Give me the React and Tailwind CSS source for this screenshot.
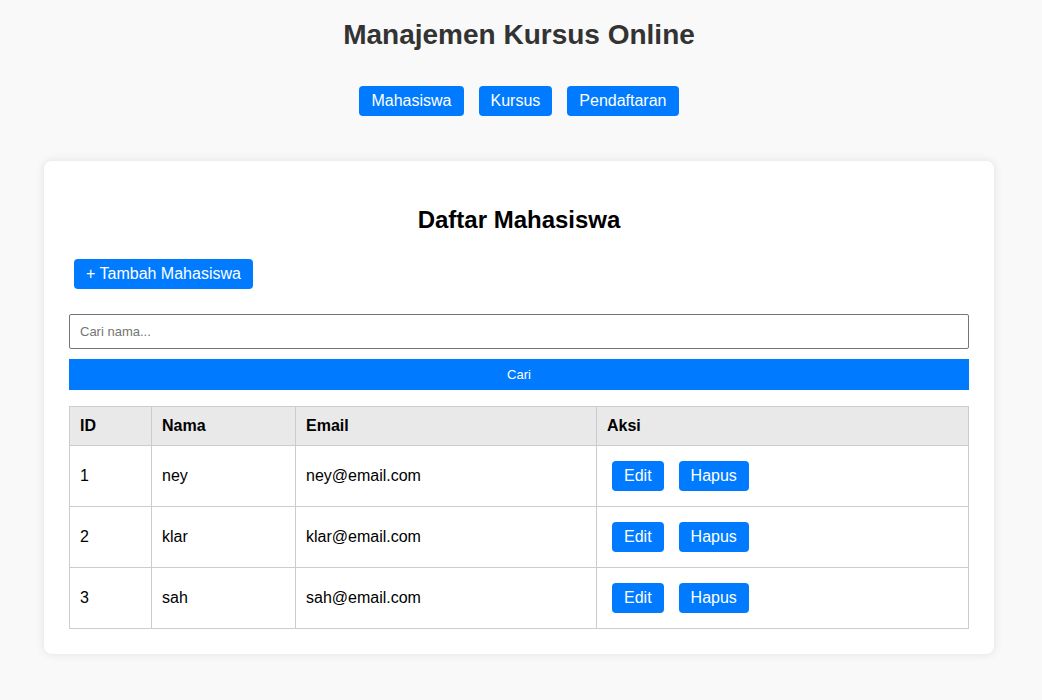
export default function App() {
  const rows = [
    { id: 1, nama: "ney", email: "ney@email.com" },
    { id: 2, nama: "klar", email: "klar@email.com" },
    { id: 3, nama: "sah", email: "sah@email.com" },
  ];
  return (
    <div className="min-h-[700px] bg-[#f9f9f9] font-['Liberation_Sans',Arial,sans-serif]">
      <div className="w-[1038px] pt-[19px]">
        <h1 className="text-center text-[28px] leading-[32px] font-bold text-[#333]">Manajemen Kursus Online</h1>
        <div className="mt-[35px] flex justify-center gap-[15px]">
          {["Mahasiswa", "Kursus", "Pendaftaran"].map((t) => (
            <button key={t} className="bg-[#007bff] text-white text-[16px] leading-[18px] py-[6px] px-3 rounded-[4px]">{t}</button>
          ))}
        </div>
        <div className="mx-[44px] mt-[45px] bg-white rounded-lg p-[25px] shadow-[0_0_10px_rgba(0,0,0,0.1)]">
          <h2 className="mt-5 mb-5 text-center text-[24px] leading-[28px] font-bold text-black">Daftar Mahasiswa</h2>
          <div className="flex">
            <button className="ml-[5px] mt-[5px] bg-[#007bff] text-white text-[16px] leading-[18px] py-[6px] px-3 rounded-[4px]">+ Tambah Mahasiswa</button>
          </div>
          <input
            className="mt-[25px] block w-full h-[35px] border border-[#767676] rounded-[2px] px-[10px] text-[13px] placeholder:text-[#757575] outline-none"
            placeholder="Cari nama..."
          />
          <button className="mt-[10px] block w-full h-[31px] bg-[#007bff] text-white text-[13px]">Cari</button>
          <table className="mt-4 w-full table-fixed border-collapse text-[16px] leading-[18px] text-black">
            <colgroup>
              <col className="w-[82px]" />
              <col className="w-[144px]" />
              <col className="w-[301px]" />
              <col />
            </colgroup>
            <thead>
              <tr className="bg-[#e9e9e9]">
                {["ID", "Nama", "Email", "Aksi"].map((h) => (
                  <th key={h} className="border border-[#cccccc] px-[10px] py-[10px] text-left font-bold">{h}</th>
                ))}
              </tr>
            </thead>
            <tbody>
              {rows.map((r) => (
                <tr key={r.id}>
                  <td className="border border-[#cccccc] px-[10px] py-[10px]">{r.id}</td>
                  <td className="border border-[#cccccc] px-[10px] py-[10px]">{r.nama}</td>
                  <td className="border border-[#cccccc] px-[10px] py-[10px]">{r.email}</td>
                  <td className="border border-[#cccccc] px-[10px] py-[10px]">
                    <div className="flex gap-[15px] my-[5px] ml-[5px]">
                      <button className="bg-[#007bff] text-white text-[16px] leading-[18px] py-[6px] px-3 rounded-[4px]">Edit</button>
                      <button className="bg-[#007bff] text-white text-[16px] leading-[18px] py-[6px] px-3 rounded-[4px]">Hapus</button>
                    </div>
                  </td>
                </tr>
              ))}
            </tbody>
          </table>
        </div>
      </div>
    </div>
  );
}
